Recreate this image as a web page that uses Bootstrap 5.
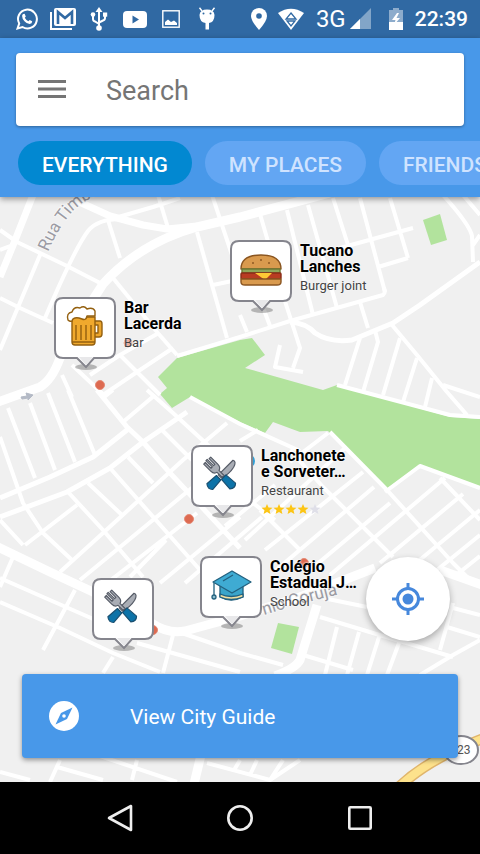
<!DOCTYPE html>
<html lang="en">
<head>
<meta charset="utf-8">
<meta name="viewport" content="width=device-width, initial-scale=1">
<title>City map</title>
<link href="https://cdn.jsdelivr.net/npm/bootstrap@5.3.0/dist/css/bootstrap.min.css" rel="stylesheet">
<style>
  :root { --brand: #4898e9; --brand-dark: #3069a3; }
  body { font-family: Roboto, sans-serif; background: #f0f0f0; }
  svg { display: block; flex-shrink: 0; }
  .status-bar { background: var(--brand-dark); height: 38px; color: #fff; padding: 0 12px 0 9px; }
  .status-cell { width: 36px; display: flex; justify-content: center; }
  .status-net { font-size: 24px; line-height: 38px; margin-left: 10px; }
  .status-battery { margin: 0 12px 0 18px; }
  .status-time { font-size: 21px; line-height: 38px; font-weight: 500; }
  .app-header { background: var(--brand); padding: 15px 16px 12px; box-shadow: 0 2px 6px rgba(0,0,0,.4); z-index: 2; position: relative; }
  .search-box { background: #fff; border-radius: 4px; height: 73px; padding: 0 20px; box-shadow: 0 1px 3px rgba(0,0,0,.35); }
  .search-box .form-control, .search-box .form-control:focus { font-size: 27px; line-height: 32px; color: #444; padding: 2px 0 0; margin-left: 38px; background: none; box-shadow: none; }
  .search-box .form-control::placeholder { color: #757575; opacity: 1; }
  .chips { gap: 13px; margin: 15px -16px 0 2px; }
  .chip { flex: none; height: 44px; border: 0; border-radius: 22px; padding: 4px 24px 0; font-size: 21px; line-height: 24px; font-weight: 500; color: #cfe3ff; background: #63a6f3; }
  .chip.active { background: #0288d1; color: #fff; }
  .map-area { background: #f0f0f0; min-height: 480px; }
  .map-art { position: absolute; inset: 0; width: 100%; height: 100%; }
  .place { position: absolute; display: flex; gap: 7px; border: 0; padding: 0; background: none; text-align: left; white-space: nowrap; color: #000; }
  .place-info { display: block; padding-top: 4px; }
  .place-name { display: block; font-size: 16px; line-height: 16px; font-weight: 700; text-shadow: 0 0 2px #fff, 0 0 2px #fff; }
  .place-kind { display: block; font-size: 13px; line-height: 22px; color: #444; text-shadow: 0 0 2px #fff; }
  .p-tucano { left: 229px; top: 42px; }
  .p-bar { left: 53px; top: 99px; }
  .p-lanchonete { left: 190px; top: 247px; }
  .p-colegio { left: 199px; top: 358px; }
  .p-food { left: 91px; top: 380px; }
  .map-controls { position: absolute; left: 0; right: 0; bottom: 0; padding: 0 22px 24px; gap: 33px; pointer-events: none; }
  .map-controls > button { pointer-events: auto; border: 0; }
  .fab { width: 84px; height: 84px; background: #fff; margin-right: 8px; box-shadow: 0 3px 7px rgba(0,0,0,.3); }
  .guide { height: 84px; border-radius: 4px; background: var(--brand); color: #fff; font-size: 21px; line-height: 24px; padding: 0 24px; gap: 48px; box-shadow: 0 2px 5px rgba(0,0,0,.4); }
  .guide span { padding-top: 2px; }
  .nav-keys { background: #000; height: 72px; }
  .nav-keys button { width: 120px; height: 72px; background: none; border: 0; padding: 0; }
</style>
<script src="https://cdn.jsdelivr.net/npm/bootstrap@5.3.0/dist/js/bootstrap.bundle.min.js"></script>
</head>
<body class="d-flex flex-column min-vh-100">

<svg width="0" height="0" class="position-absolute" aria-hidden="true">
  <defs>
    <symbol id="pin" viewBox="0 0 64 76">
      <ellipse cx="33" cy="71" rx="11" ry="3" fill="#000" opacity=".25"/>
      <path d="M10 2H54Q62 2 62 10V54Q62 62 54 62H41L33 71L24 62H10Q2 62 2 54V10Q2 2 10 2Z" fill="#fff" stroke="#85858d" stroke-width="2"/>
      <path d="M26 61H40L33 69Z" fill="#e8e8ea"/>
    </symbol>
    <symbol id="cutlery" viewBox="0 0 64 76">
      <g transform="translate(3 3) scale(.9)" stroke="#555b66" stroke-width="1.300" stroke-linejoin="round">
        <g transform="rotate(45 31 31)">
          <path d="M29 33V10Q33 8 35 15Q37 23 34 33Z" fill="#a9adb5"/>
          <path d="M28 35H35L36 49Q32 53 27 49Z" fill="#0d73a8" stroke="#1a4f70"/>
        </g>
        <g transform="rotate(-45 31 31)">
          <path d="M26 9V20Q26 25 30 26V34H33V26Q37 25 37 20V9L34.500 9V18H32.500V8H30.500V18H28.500V9Z" fill="#a9adb5"/>
          <path d="M28 35H35L36 49Q32 53 27 49Z" fill="#0d73a8" stroke="#1a4f70"/>
        </g>
      </g>
    </symbol>
  </defs>
</svg>

<div class="status-bar d-flex align-items-center">
  <div class="d-flex align-items-center">
    <span class="status-cell"><svg width="24" height="24" viewBox="0 0 24 24" fill="none" stroke="#fff"><path d="M2.500 21.500L4.200 16.500A9.400 9.400 0 1 1 7.500 20Z" stroke-width="2"/><path d="M8.200 7L9.600 6.800L10.800 9.400L9.800 10.800Q11 13.200 13.400 14.200L14.700 12.900L17.200 14.200Q17.200 16.700 14.600 17Q12 17 9.500 14.200Q7 11.500 7.100 9Q7.200 7.700 8.200 7Z" fill="#fff" stroke="none"/></svg></span>
    <span class="status-cell"><svg width="26" height="24" viewBox="0 0 26 24"><path d="M1 5V22H22" fill="none" stroke="#fff" stroke-width="2"/><rect x="4" y="1" width="22" height="18" rx="2" fill="#fff"/><path d="M8 17V5L15 11L22 5V17" fill="none" stroke="#3069a3" stroke-width="2.600"/></svg></span>
    <span class="status-cell"><svg width="18" height="24" viewBox="0 0 18 24" fill="none" stroke="#fff" stroke-width="2"><path d="M9 21V3M3 8V12Q3 14 5 14.500L9 17M15 8V11Q15 13 13 13.500L9 15.500"/><path d="M9 0L12.500 5H5.500Z" fill="#fff" stroke="none"/><circle cx="9" cy="21" r="2.800" fill="#fff" stroke="none"/><circle cx="3" cy="7.500" r="2.300" fill="#fff" stroke="none"/><rect x="13" y="5.500" width="4.200" height="4.200" fill="#fff" stroke="none"/></svg></span>
    <span class="status-cell"><svg width="24" height="18" viewBox="0 0 24 18"><rect y="1" width="24" height="17" rx="4" fill="#fff"/><path d="M9.500 5.500L16 9.500L9.500 13.500Z" fill="#3069a3"/></svg></span>
    <span class="status-cell"><svg width="18" height="18" viewBox="0 0 18 18"><rect x=".8" y=".8" width="16.400" height="16.400" fill="none" stroke="#fff" stroke-width="1.400"/><path d="M3 15V12L6 9.500L9 12L12 10.500L15 13V15Z" fill="#fff"/></svg></span>
    <span class="status-cell"><svg width="18" height="24" viewBox="0 0 18 24"><path d="M4 4L1.500 .8M14 4L16.500 .8" stroke="#fff" stroke-width="1.400"/><path d="M1.500 8Q2 2.500 9 2.500T16.500 8Q16.500 15 11 16V22.500H7.500V16Q1.500 15 1.500 8Z" fill="#fff"/><circle cx="5.500" cy="6.500" r="1" fill="#3069a3"/><circle cx="12.500" cy="6.500" r="1" fill="#3069a3"/></svg></span>
  </div>
  <div class="d-flex align-items-center ms-auto">
    <svg width="18" height="22" viewBox="0 0 18 22" class="me-2"><path d="M9 0A8 8 0 0 0 1 8Q1 13 9 22Q17 13 17 8A8 8 0 0 0 9 0Z" fill="#fff"/><circle cx="9" cy="8" r="2.800" fill="#3069a3"/></svg>
    <svg width="30" height="22" viewBox="0 0 30 22"><path d="M2 5Q15 -3.500 28 5L15 22Z" fill="#fff"/><path d="M15 5L20 11H10ZM11 13H19L15 18Z" fill="none" stroke="#3069a3" stroke-width="1.300"/></svg>
    <span class="status-net">3G</span>
    <svg width="21" height="22" viewBox="0 0 21 22" class="ms-1"><path d="M0 21L21 0V21Z" fill="#fff" opacity=".4"/><path d="M0 21L10 11V21Z" fill="#fff"/></svg>
    <svg width="14" height="22" viewBox="0 0 14 22" class="status-battery"><path d="M0 2H4V0H10V2H14V14H0Z" fill="#fff" opacity=".45"/><path d="M0 14H14V22H0Z" fill="#fff"/><path d="M8 5L3 12H6.500L5 17L11 10H7.500L10 5Z" fill="#fff"/></svg>
    <span class="status-time">22:39</span>
  </div>
</div>

<header class="app-header">
  <div class="search-box d-flex align-items-center">
    <button type="button" class="btn p-0 border-0" aria-label="Menu"><svg width="32" height="24" viewBox="0 0 32 24"><path d="M2 3.500H30M2 11H30M2 18.500H30" stroke="#757575" stroke-width="2.800"/></svg></button>
    <input type="search" class="form-control border-0" placeholder="Search" aria-label="Search">
  </div>
  <div class="chips d-flex overflow-hidden">
    <button type="button" class="chip active">EVERYTHING</button>
    <button type="button" class="chip">MY PLACES</button>
    <button type="button" class="chip">FRIENDS</button>
  </div>
</header>

<main class="map-area position-relative flex-grow-1 overflow-hidden">
  <svg class="map-art" viewBox="0 197 480 585" preserveAspectRatio="xMidYMid slice" aria-hidden="true">
    <rect y="197" width="480" height="585" fill="#f0f0f0"/>
    <!-- parks -->
    <g fill="#b2e39d">
      <path d="M158 377L177 358L240 340L252 338L265 355L245 368L323 390L337 385L450 417L480 419V487L420 465L385 490L328 431L300 432L273 422L265 433L240 422L190 397L172 408L160 394L167 388Z"/>
      <path d="M423 220L440 214L447 240L431 245Z"/>
      <path d="M278 623L299 627L292 654L271 648Z"/>
    </g>
    <!-- side streets -->
    <g fill="none" stroke="#fff" stroke-width="4" stroke-linejoin="round">
      <path d="M0 230L17 242L65 265L102 284M0 250L13 245M0 298L20 308L53 323M40 255L0 350M125 219Q98 218 88 231Q75 248 45 318"/>
      <path d="M108 220L120 258M158 195L168 228M115 218L153 207L180 198M212 195L232 255M197 232L227 338M213 285L232 281M113 278L157 332L177 355"/>
      <path d="M177 356L240 337L290 321L383 295Q386 293 384 288M173 348L140 370L103 395M157 334L120 355L90 375M120 355L160 395M72 365L105 396M62 375L72 397"/>
      <path d="M260 214L269 245M287 210L313 315M308 205L337 308M333 198L348 245M360 198L385 292M390 198L408 258M340 248L413 228M378 267L408 258M240 315L247 332M264 310L270 326M283 295L300 348L293 368M280 345L275 367L303 372"/>
      <path d="M360 302L368 328M443 195Q470 225 472 236L473 262M463 195L480 215M473 245L480 235M360 338L345 385M375 330L378 342L363 392M400 338L383 395M417 358L403 402M432 378L425 407M443 385L480 397"/>
      <path d="M392 325L417 355L447 392L467 415M337 385L450 415L480 417"/>
      <path d="M190 397L240 424L300 451M8 408L35 478M30 403L55 470M48 393L75 462M68 390L95 455M0 437L23 503L43 533L72 560M123 422L155 395M103 398L113 390"/>
      <path d="M147 390L173 413L210 447M162 430L192 460M128 457L153 483M110 468L200 570M88 483L122 515M68 492L103 530L143 577M25 545L77 505M0 520L23 545M60 572L103 533L183 460L227 423M80 580L193 487M107 583L197 513M130 577L166 540M160 583L240 517M185 583L262 517M13 557L0 587"/>
      <path d="M240 441L258 430M290 462L328 433M225 526L275 485M245 540L345 448M240 493L275 520M260 510L300 550M290 450L323 487L393 557M330 432L387 490L453 563L470 580M440 478L480 520"/>
      <path d="M363 472L265 550M374 487L275 571M390 503L310 570M445 478L330 575M463 494L380 563M480 510L410 568M480 535L437 570M480 556L455 576"/>
      <path d="M385 492L420 466L480 488"/>
      <path d="M0 578L43 597L107 625M0 602L60 628L113 653L160 672M75 590L43 650M113 657L103 673M137 643L240 672M173 630L240 653L283 665M173 635L163 673"/>
      <path d="M320 617L373 633L453 657M323 598L367 607M303 655L353 670M337 627L325 675M359 632L347 675M379 637L367 675M399 643L387 675M420 675L453 655L480 640M453 608L480 615M453 603L440 650M447 627L480 637"/>
      <path d="M60 760L50 782M57 767L103 780M97 755L177 782M137 760L132 780M207 763L270 780L300 760M240 760L233 772M257 760L250 775M283 760L270 780M0 772L30 780"/>
    </g>
    <!-- wider roads -->
    <g fill="none" stroke="#fff" stroke-linejoin="round">
      <path d="M33 195L14 243L0 277M75 200L110 216L143 225L167 229L197 226" stroke-width="7"/>
      <path d="M330 193L240 217L197 227Q140 243 103 284L85 312L60 358Q52 380 40 387L-2 402" stroke-width="9"/>
      <path d="M290 322Q306 323 315 333Q330 343 352 340L393 323L420 305L480 262" stroke-width="5"/>
      <path d="M0 498L50 477L93 457L127 430M0 517L67 492L110 468L143 442L187 412M97 390L127 427L143 442L170 473L240 548" stroke-width="5"/>
      <path d="M-2 547L50 572L93 592L153 624Q168 634 185 631L240 616L300 597L375 568M440 570L482 585" stroke-width="9"/>
      <path d="M317 605L300 660Q296 668 275 676M201 755L194 784" stroke-width="9"/>
    </g>
    <path d="M400 786Q430 758 482 739" fill="none" stroke="#e0b56c" stroke-width="11"/>
    <path d="M400 786Q430 758 482 739" fill="none" stroke="#fde28c" stroke-width="8"/>
    <ellipse cx="461" cy="750" rx="17" ry="14" fill="#fff" stroke="#85858d" stroke-width="2"/>
    <text x="457" y="754" font-size="12" fill="#555">23</text>
    <path d="M21 397L27 396L26 393L33 395L28 400L28 398L22 399Z" fill="#b4bac6" stroke="#b4bac6"/>
    <g fill="none"><path id="rua" d="M48 252Q59 226 74 210Q88 197 110 190"/><path id="coruja" d="M264 615L300 604L360 589"/></g>
    <g fill="#9b9ba3" stroke="#f6f6f6" stroke-width="2" paint-order="stroke" font-size="17">
      <text><textPath href="#rua">Rua Timbiras</textPath></text>
      <text><textPath href="#coruja">nio Coruja</textPath></text>
    </g>
    <g fill="#dd6a51" stroke="#e58a75" stroke-width="1">
      <circle cx="100" cy="385" r="4.500"/><circle cx="189" cy="519" r="4.500"/><circle cx="153" cy="630" r="4.500"/><circle cx="304" cy="563" r="4.500"/><circle cx="128" cy="343" r="4" opacity=".7"/>
    </g>
    <circle cx="248" cy="461" r="7" fill="#2f9fd6"/>
  </svg>

  <button type="button" class="place p-tucano">
    <svg width="64" height="76" viewBox="0 0 64 76"><use href="#pin"/>
      <g stroke="#8a5520" stroke-width="1.400" stroke-linejoin="round"><path d="M12 30Q12 16 32 16T52 30Z" fill="#d99a4e"/><rect x="13" y="30" width="38" height="4" fill="#8fa65a" stroke="#6d7a35"/><rect x="12" y="34" width="40" height="6" rx="1" fill="#b83b22" stroke="#8a2d18"/><path d="M26 34H43L36 41Z" fill="#ffc935" stroke="none"/><path d="M12 40H52V43Q52 46 48 46H16Q12 46 12 43Z" fill="#d99a4e"/><path d="M24 23V25M32 20V22M40 23V25" fill="none"/></g></svg>
    <span class="place-info"><span class="place-name">Tucano<br>Lanches</span><span class="place-kind">Burger joint</span></span>
  </button>

  <button type="button" class="place p-bar">
    <svg width="64" height="76" viewBox="0 0 64 76"><use href="#pin"/>
      <g stroke="#94600f" stroke-width="1.400" stroke-linejoin="round"><path d="M41 25H47Q49 25 49 28V38Q49 41 46 41H41V37H45V29H41Z" fill="#eba52c"/><path d="M19 21H42V46Q42 49 39 49H22Q19 49 19 46Z" fill="#f0a92d"/><path d="M23 29V44M28 29V44M33 29V44M38 29V44M19 46H42" fill="none"/><path d="M15 24Q13 17 19 16Q21 10 27 12Q31 9 34 13Q40 11 42 15V20H34Q33 25 29 23L26 22Q20 21 19 25Q17 26 15 24Z" fill="#fff"/></g></svg>
    <span class="place-info"><span class="place-name">Bar<br>Lacerda</span><span class="place-kind">Bar</span></span>
  </button>

  <button type="button" class="place p-lanchonete">
    <svg width="64" height="76" viewBox="0 0 64 76"><use href="#pin"/><use href="#cutlery"/></svg>
    <span class="place-info"><span class="place-name">Lanchonete<br>e Sorveter…</span><span class="place-kind">Restaurant</span>
      <svg width="60" height="14" viewBox="0 0 60 14" role="img" aria-label="4 out of 5 stars"><defs><path id="star" d="M6 2L7.500 5.500L11.500 5.800L8.500 8.300L9.400 12L6 10L2.600 12L3.500 8.300L.5 5.800L4.500 5.500Z"/></defs><g fill="#fcc515"><use href="#star"/><use href="#star" x="12"/><use href="#star" x="24"/><use href="#star" x="36"/></g><use href="#star" x="48" fill="#dfdfe8"/></svg></span>
  </button>

  <button type="button" class="place p-colegio">
    <svg width="64" height="76" viewBox="0 0 64 76"><use href="#pin"/>
      <g stroke="#23617f" stroke-width="1.300" stroke-linejoin="round"><path d="M21 28V42Q32 48 44 42V28Z" fill="#3ba5cb"/><path d="M21 39Q32 44 44 39V42Q32 47 21 42Z" fill="#f2dfa0"/><path d="M14 27L33 16L52 27L33 38Z" fill="#3fabd3"/><path d="M24 26L34 20M15 28V40" fill="none"/><circle cx="15" cy="42" r="2" fill="#8bbccc"/></g></svg>
    <span class="place-info"><span class="place-name">Colégio<br>Estadual J…</span><span class="place-kind">School</span></span>
  </button>

  <button type="button" class="place p-food" aria-label="Restaurant">
    <svg width="64" height="76" viewBox="0 0 64 76"><use href="#pin"/><use href="#cutlery"/></svg>
  </button>

  <div class="map-controls d-flex flex-column">
    <button type="button" class="fab rounded-circle align-self-end d-flex align-items-center justify-content-center" aria-label="My location">
      <svg width="32" height="32" viewBox="0 0 32 32"><circle cx="16" cy="16" r="10.500" fill="none" stroke="#4688dc" stroke-width="3"/><circle cx="16" cy="16" r="5.500" fill="#4688dc"/><path d="M16 0V6M16 26V32M0 16H6M26 16H32" stroke="#4688dc" stroke-width="3"/></svg>
    </button>
    <button type="button" class="guide d-flex align-items-center">
      <svg width="36" height="36" viewBox="0 0 36 36"><circle cx="18" cy="18" r="15" fill="#fff"/><path d="M26.500 9.500L21 21L9.500 26.500L15 15Z" fill="#4898e9"/><circle cx="18" cy="18" r="1.800" fill="#fff"/></svg>
      <span>View City Guide</span>
    </button>
  </div>
</main>

<footer class="nav-keys d-flex justify-content-center">
  <button type="button" class="d-flex align-items-center justify-content-center" aria-label="Back"><svg width="28" height="30" viewBox="0 0 28 30"><path d="M25 3V27L3 15Z" fill="none" stroke="#eee" stroke-width="2.600" stroke-linejoin="round"/></svg></button>
  <button type="button" class="d-flex align-items-center justify-content-center" aria-label="Home"><svg width="28" height="28" viewBox="0 0 28 28"><circle cx="14" cy="14" r="11.700" fill="none" stroke="#eee" stroke-width="2.600"/></svg></button>
  <button type="button" class="d-flex align-items-center justify-content-center" aria-label="Recent apps"><svg width="26" height="26" viewBox="0 0 26 26"><rect x="2.300" y="2.300" width="21.400" height="21.400" rx="1" fill="none" stroke="#eee" stroke-width="2.600"/></svg></button>
</footer>
</body>
</html>
